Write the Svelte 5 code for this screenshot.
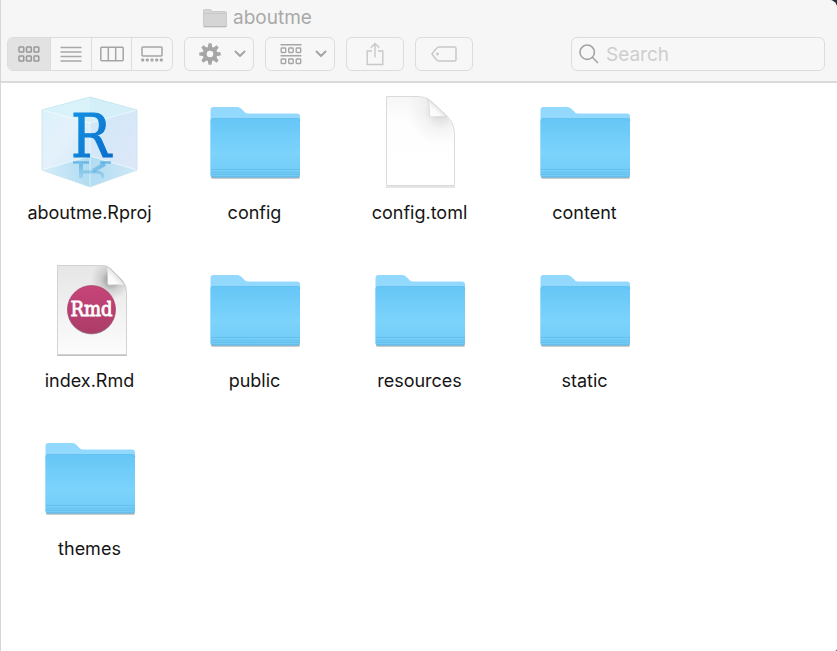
<script>
  const files = [
    { name: 'aboutme.Rproj', kind: 'rproj' },
    { name: 'config', kind: 'folder' },
    { name: 'config.toml', kind: 'doc' },
    { name: 'content', kind: 'folder' },
    { name: 'index.Rmd', kind: 'rmd' },
    { name: 'public', kind: 'folder' },
    { name: 'resources', kind: 'folder' },
    { name: 'static', kind: 'folder' },
    { name: 'themes', kind: 'folder' }
  ];
  let view = $state('icons');
  let query = $state('');
</script>

<svelte:head><title>aboutme</title></svelte:head>

<svg class="defs" width="0" height="0" aria-hidden="true">
  <defs>
    <linearGradient id="front" x1="0" y1="0" x2="0" y2="1">
      <stop offset="0" stop-color="#66c6f6" /><stop offset=".6" stop-color="#7cd3fb" /><stop offset="1" stop-color="#70cbf6" />
    </linearGradient>
    <linearGradient id="paper" x1="0" y1="0" x2="0" y2="1">
      <stop offset="0" stop-color="#f6f6f6" /><stop offset=".3" stop-color="#fefefe" /><stop offset="1" stop-color="#fff" />
    </linearGradient>
    <linearGradient id="greypaper" x1="0" y1="0" x2="0" y2="1">
      <stop offset="0" stop-color="#e6e6e6" /><stop offset="1" stop-color="#fcfcfc" />
    </linearGradient>
    <linearGradient id="curl" x1="0" y1="1" x2=".6" y2=".4">
      <stop offset="0" stop-color="#fff" /><stop offset=".6" stop-color="#fafafa" /><stop offset="1" stop-color="#dedede" />
    </linearGradient>
    <radialGradient id="shade" gradientUnits="userSpaceOnUse" cx="72" cy="20" r="34">
      <stop offset="0" stop-color="#000" stop-opacity=".16" /><stop offset=".5" stop-color="#000" stop-opacity=".04" /><stop offset="1" stop-color="#000" stop-opacity="0" />
    </radialGradient>
    <radialGradient id="curlshade" gradientUnits="userSpaceOnUse" cx="72" cy="20" r="20">
      <stop offset="0" stop-color="#000" stop-opacity=".4" /><stop offset=".5" stop-color="#000" stop-opacity=".12" /><stop offset="1" stop-color="#000" stop-opacity="0" />
    </radialGradient>
    <linearGradient id="cubeL" x1="0" y1="0" x2="1" y2="1">
      <stop offset="0" stop-color="#dbf2fb" /><stop offset=".5" stop-color="#e4f1fb" /><stop offset="1" stop-color="#cfeaf8" />
    </linearGradient>
    <linearGradient id="cubeR" x1="0" y1="0" x2="1" y2="1">
      <stop offset="0" stop-color="#cce8f7" /><stop offset="1" stop-color="#dfe7f9" />
    </linearGradient>
    <linearGradient id="floor" x1="0" y1="0" x2="1" y2="0">
      <stop offset="0" stop-color="#d5edf8" /><stop offset=".5" stop-color="#b0dcf2" /><stop offset="1" stop-color="#cfe8f7" />
    </linearGradient>
    <linearGradient id="blue" x1="0" y1="0" x2="1" y2="1">
      <stop offset="0" stop-color="#1796e5" /><stop offset="1" stop-color="#0668c8" />
    </linearGradient>
    <linearGradient id="mirror" gradientUnits="userSpaceOnUse" x1="0" y1="68" x2="0" y2="89">
      <stop offset="0" stop-color="#4aa6de" stop-opacity=".75" /><stop offset="1" stop-color="#4aa6de" stop-opacity=".15" />
    </linearGradient>
    <linearGradient id="badge" x1="0" y1="0" x2="0" y2="1">
      <stop offset="0" stop-color="#c74479" /><stop offset="1" stop-color="#ab3c68" />
    </linearGradient>
  </defs>
</svg>

{#snippet chevron()}
  <svg width="12" height="8" viewBox="0 0 12 8" aria-hidden="true"><path d="M1.500 1.500 6 6l4.500-4.500" fill="none" stroke="#a6a6a6" stroke-width="2" stroke-linecap="round" stroke-linejoin="round" /></svg>
{/snippet}

<div class="window">
  <header>
    <h1>
      <svg width="24" height="19" viewBox="0 0 24 19" aria-hidden="true">
        <path d="M.5 17V1.500q0-1 1-1h6l2 2h13q1 0 1 1V17q0 1-1 1h-21q-1 0-1-1Z" fill="#d5d5d5" stroke="#cbcbcb" />
        <path d="M1 4.500h22" stroke="#c8c8c8" />
        <path d="M1 17.500h22" stroke="#b9b9b9" />
      </svg>
      aboutme
    </h1>
    <div class="toolbar">
      <div class="segments" role="group" aria-label="View">
        <button aria-label="Icon view" aria-pressed={view === 'icons'} onclick={() => (view = 'icons')}>
          <svg width="24" height="18" viewBox="0 0 24 18" fill="none" stroke="#989898" stroke-width="1.500">
            {#each [2, 11] as y}{#each [2, 9.5, 17] as x}<rect {x} {y} width="4.800" height="5" rx=".8" />{/each}{/each}
          </svg>
        </button>
        <button aria-label="List view" aria-pressed={view === 'list'} onclick={() => (view = 'list')}>
          <svg width="22" height="18" viewBox="0 0 22 18" stroke="#a8a8a8" stroke-width="1.400"><path d="M.5 2.500h21M.5 7h21M.5 11.500h21M.5 16h21" /></svg>
        </button>
        <button aria-label="Column view" aria-pressed={view === 'columns'} onclick={() => (view = 'columns')}>
          <svg width="24" height="16" viewBox="0 0 24 16" fill="none" stroke="#a5a5a5" stroke-width="1.500"><rect x=".8" y="1.200" width="22.400" height="13.600" rx="1" /><path d="M8.300 1v14M15.700 1v14" /></svg>
        </button>
        <button aria-label="Gallery view" aria-pressed={view === 'gallery'} onclick={() => (view = 'gallery')}>
          <svg width="22" height="18" viewBox="0 0 22 18"><rect x="1" y="2" width="20" height="9" rx="1" fill="none" stroke="#a5a5a5" stroke-width="1.500" />{#each [0.2, 4.8, 9.5, 14.2, 18.8] as x}<rect {x} y="13.500" width="3" height="3" rx="1" fill="#a5a5a5" />{/each}</svg>
        </button>
      </div>
      <button class="tool menu" aria-label="Actions">
        <svg width="22" height="22" viewBox="-11 -11 22 22">
          <g fill="#a6a6a6">{#each [0, 45, 90, 135, 180, 225, 270, 315] as a}<path d="M-2.300-6-1.500-10.700h3L2.300-6Z" transform="rotate({a})" />{/each}</g>
          <circle r="5.300" fill="none" stroke="#a6a6a6" stroke-width="4" />
        </svg>
        {@render chevron()}
      </button>
      <button class="tool menu" aria-label="Group items">
        <svg width="22" height="22" viewBox="0 0 22 22" fill="none" stroke="#a6a6a6" stroke-width="1.400">
          <path d="M.5 1.700h21M.5 12.700h21" />
          {#each [5, 16] as y}{#each [1.2, 8.7, 16.2] as x}<rect {x} {y} width="4.500" height="4.500" rx=".7" />{/each}{/each}
        </svg>
        {@render chevron()}
      </button>
      <button class="tool" aria-label="Share">
        <svg width="18" height="24" viewBox="0 0 18 24" fill="none" stroke="#c8c8c8" stroke-width="1.400"><path d="M6 9H1.200v13.500h15.600V9H12M9 15.500V1.500M4.800 5.700 9 1.500l4.200 4.200" /></svg>
      </button>
      <button class="tool" aria-label="Edit tags">
        <svg width="26" height="16" viewBox="0 0 26 16" fill="none" stroke="#c8c8c8" stroke-width="1.500"><path d="M7.500 1H23.500q1.500 0 1.500 1.500v11q0 1.500-1.500 1.500h-16Q6 15 1 8 6 1 7.500 1Z" stroke-linejoin="round" /><circle cx="6.500" cy="8" r="1.400" fill="#c8c8c8" stroke="none" /></svg>
      </button>
      <label class="search">
        <svg width="20" height="20" viewBox="0 0 20 20" fill="none" stroke="#a3a3a3" stroke-width="1.600" aria-hidden="true"><circle cx="8.200" cy="8.200" r="7.200" /><path d="m13.300 13.300 5.700 5.700" /></svg>
        <input type="search" aria-label="Search" placeholder="Search" bind:value={query} />
      </label>
    </div>
  </header>

  <main>
    <ul>
      {#each files as file}
        <li>
          <button class="file">
            <svg width="101" height="98" viewBox="0 0 101 98" aria-hidden="true">
              {#if file.kind === 'folder'}
                <path d="M7 84h89v1.500q0 1.500-2 1.500H9q-2 0-2-1.500Z" fill="#cfc9c9" />
                <path d="M6.500 83V18q0-3 3-3h24q2 0 3.500 1.500l4 4q1 1 3 1h49q3 0 3 3V83q0 2-2 2H8.500q-2 0-2-2Z" fill="#93d9fd" />
                <path d="M6.500 83V29q0-3 3-3H93q3 0 3 3V83q0 2.500-2 2.500H8.500q-2 0-2-2.500Z" fill="url(#front)" />
                <path d="M7 29q0-2.500 3-2.500H93q3 0 3 2.500" fill="none" stroke="#62c0ee" stroke-opacity=".7" />
                <path d="M7 77.500h89M7 80.500h89M7 82.500h89" stroke="#60bae6" stroke-opacity=".65" />
                <path d="M7.500 85h87.500" stroke="#5caed8" />
              {:else if file.kind === 'rproj'}
                <path d="M3 18 51 5v75L3 78Z" fill="url(#cubeL)" />
                <path d="M51 5 98 18v60l-47 2Z" fill="url(#cubeR)" />
                <path d="M3 78 51 64l47 14-47 17Z" fill="url(#floor)" />
                <path d="M3 18 51 5l47 13-47 13Z" fill="#d6f3f9" opacity=".65" />
                <path d="M3 18 51 31 98 18M51 31v64M3 78l48-14 47 14" fill="none" stroke="#fff" stroke-opacity=".55" />
                <path d="M3 18 51 5l47 13v60L51 95 3 78Z" fill="none" stroke="#c4e3f0" stroke-width=".8" />
                <g fill="none" stroke="url(#mirror)" stroke-width="3">
                  <path d="M34 70.500h16M61 70.500h11" stroke-width="2.500" />
                  <path d="M42 72v14M66 72 54 79" stroke-width="4" />
                  <path d="M44 80h13q9 1 6 6" />
                </g>
                <text x="32" y="65" class="slab" font-size="59" fill="url(#blue)" stroke="url(#blue)" stroke-width="1">R</text>
              {:else if file.kind === 'doc'}
                <path d="M17 95h69" stroke="#999" stroke-opacity=".5" />
                <path d="M17.500 4.500H48Q57 4.500 63 10L79 25Q85.500 32 85.500 43V93.500H17.500Z" fill="url(#paper)" stroke="#dadada" />
                <path d="M18 5h30q9 0 15 6l15 14q7 7 7 18v20H18Z" fill="url(#shade)" />
                <path d="M58 6.500q3 7 2.500 16.500 0 2 2 2Q71 24 78 25 70 15 58 6.500Z" fill="url(#curl)" stroke="#d2d2d2" stroke-width=".7" />
              {:else}
                <path d="M18 95.500h70" stroke="#999" stroke-opacity=".6" />
                <path d="M18.500 5.500H64Q69 5.500 73 10L83 20Q87.500 25 87.500 32V94.500H18.500Z" fill="url(#greypaper)" stroke="#d2d2d2" />
                <path d="M19 6h45q5 0 9 4l10 10q4 5 4 12v20H19Z" fill="url(#curlshade)" />
                <path d="M67 6q2 5 1.500 17 0 2 2 2Q80 24 86 26 79 14 67 6Z" fill="url(#curl)" stroke="#c9c9c9" stroke-width=".7" />
                <circle cx="52.500" cy="50.500" r="24" fill="#777" opacity=".55" />
                <circle cx="52.500" cy="49.500" r="24" fill="url(#badge)" stroke="#a4496d" stroke-width=".7" />
                <text x="52.500" y="56" text-anchor="middle" class="slab" font-size="20" fill="#fff" stroke="#fff" stroke-width=".8">Rmd</text>
              {/if}
            </svg>
            <span>{file.name}</span>
          </button>
        </li>
      {/each}
    </ul>
  </main>
</div>

<style>
  :global(body) { margin: 0; background: #26343d; }
  .defs { position: absolute; }
  .window {
    box-sizing: border-box;
    min-height: 100vh;
    background: #fff;
    border-left: 1px solid #d6d6d6;
    border-radius: 0 8px 2px 0;
    overflow: hidden;
    font-family: Inter, 'Liberation Sans', sans-serif;
  }
  button { font: inherit; border: 0; padding: 0; background: none; color: inherit; }
  svg { display: block; flex: none; }
  .slab { font-family: 'DejaVu Serif Condensed', 'DejaVu Serif', serif; }
  header { background: #f6f6f6; border-bottom: 2px solid #dadada; padding-bottom: 10px; }
  h1 {
    display: flex;
    align-items: center;
    gap: 6px;
    margin: 0;
    padding: 6px 0 7px 202px;
    font-size: 19px;
    line-height: 24px;
    font-weight: 400;
    color: #a9a9a9;
  }
  .toolbar { display: flex; gap: 11px; padding: 0 12px 0 6px; }
  .segments, .tool, .search {
    box-sizing: border-box;
    height: 34px;
    border: 1px solid #dcdcdc;
    border-radius: 6px;
    background: #f7f7f7;
  }
  .segments { display: flex; width: 166px; overflow: hidden; }
  .segments button { flex: 1; display: flex; align-items: center; justify-content: center; }
  .segments button + button { border-left: 1px solid #dcdcdc; }
  .segments button[aria-pressed='true'] { background: #e2e2e2; flex: 0 0 42px; }
  .tool { display: flex; align-items: center; justify-content: center; width: 58px; }
  .menu { width: 70px; gap: 13px; padding-left: 7px; }
  .search { display: flex; align-items: center; gap: 7px; flex: 0 1 254px; min-width: 0; margin-left: auto; padding: 0 7px; }
  input { flex: 1; min-width: 0; padding: 0; border: 0; outline: 0; background: none; font: inherit; font-size: 19px; color: #555; appearance: none; }
  input::placeholder { color: #cecece; opacity: 1; }
  ul {
    display: grid;
    grid-template-columns: repeat(auto-fill, 165px);
    grid-auto-rows: 168px;
    margin: 0;
    padding: 9px 16px 0 6px;
    list-style: none;
  }
  .file { display: flex; flex-direction: column; align-items: center; gap: 11px; width: 100%; }
  .file span { font-size: 18px; line-height: 24px; color: #151515; }
</style>
